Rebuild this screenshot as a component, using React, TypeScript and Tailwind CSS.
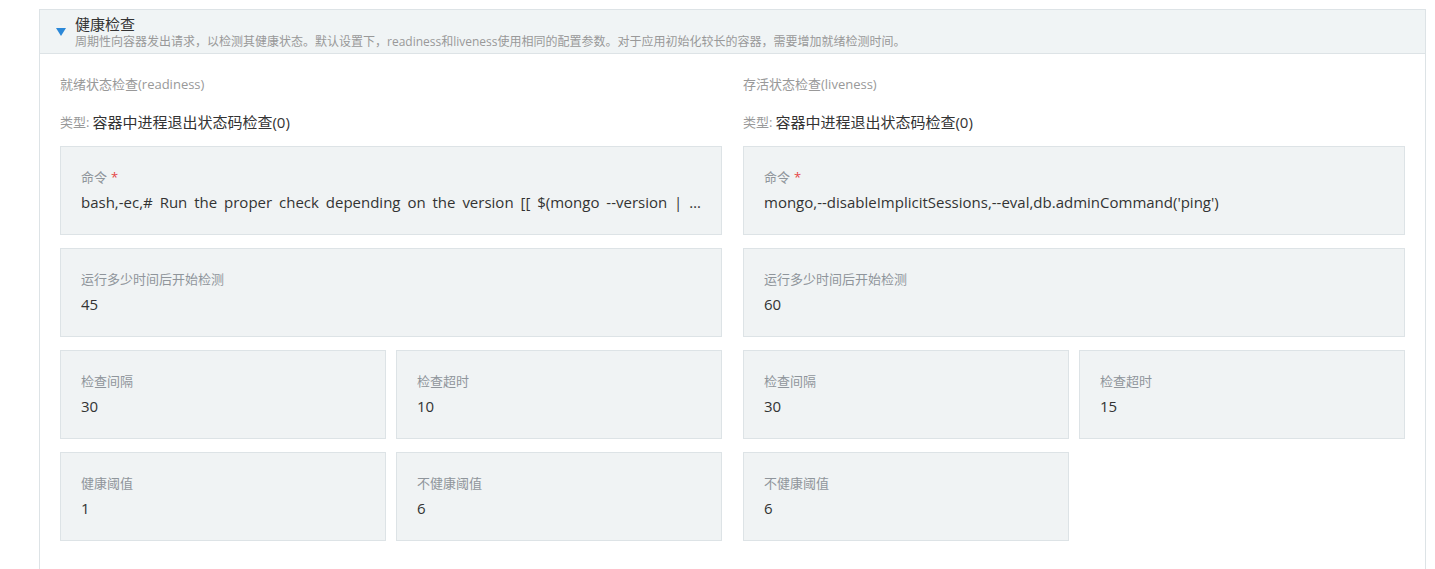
const font = "font-['Open_Sans','Noto_Sans_CJK_SC',sans-serif]";

type Field = { label: string; value: string; required?: boolean };

const FieldCard: React.FC<{ field: Field }> = ({ field }) => (
    <div className="h-[89px] min-w-0 border border-[#dde3e6] bg-[#f0f3f4] px-5 pt-[21px]">
        <div className="text-[13px] leading-[18px] text-[#8f959b]">
            {field.label}
            {field.required && <span className="ml-1 text-[#e54545]">*</span>}
        </div>
        <div className="mt-[5px] truncate text-[15px] leading-[22px] text-[#333] [word-spacing:3px]">{field.value}</div>
    </div>
);

const ProbeColumn: React.FC<{
    title: string;
    command: string;
    initial: string;
    period: string;
    timeout: string;
    success?: string;
    failure: string;
}> = ({ title, command, initial, period, timeout, success, failure }) => (
    <div className="min-w-0">
        <div className="text-[13px] leading-5 text-[#999]">{title}</div>
        <div className="mt-[18px] flex items-center leading-5">
            <span className="text-[13px] text-[#999]">类型:</span>
            <span className="ml-[3px] text-[15px] text-[#333]">容器中进程退出状态码检查(0)</span>
        </div>
        <div className="mt-[14px] flex flex-col gap-[13px]">
            <FieldCard field={{ label: "命令", value: command, required: true }} />
            <FieldCard field={{ label: "运行多少时间后开始检测", value: initial }} />
            <div className="grid grid-cols-2 gap-[10px]">
                <FieldCard field={{ label: "检查间隔", value: period }} />
                <FieldCard field={{ label: "检查超时", value: timeout }} />
            </div>
            <div className="grid grid-cols-2 gap-[10px]">
                {success ? (
                    <>
                        <FieldCard field={{ label: "健康阈值", value: success }} />
                        <FieldCard field={{ label: "不健康阈值", value: failure }} />
                    </>
                ) : (
                    <FieldCard field={{ label: "不健康阈值", value: failure }} />
                )}
            </div>
        </div>
    </div>
);

export default function App() {
    return (
        <div className={`${font} min-h-[569px] bg-white pl-[39px] pr-[9px] pt-[9px]`}>
            <div className="border border-b-0 border-[#dde3e6]">
                <div className="flex items-start border-b border-[#dde3e6] bg-[#f0f4f5] pb-[3px] pl-[16px] pt-[4px]">
                    <svg width="10" height="8" viewBox="0 0 10 8" className="mr-[9px] mt-[14px]">
                        <polygon points="0,0 10,0 5,8" fill="#2b88d8" />
                    </svg>
                    <div>
                        <div className="text-[15px] leading-5 text-[#333]">健康检查</div>
                        <div className="text-[12px] leading-4 text-[#999]">
                            周期性向容器发出请求，以检测其健康状态。默认设置下，readiness和liveness使用相同的配置参数。对于应用初始化较长的容器，需要增加就绪检测时间。
                        </div>
                    </div>
                </div>
                <div className="grid grid-cols-2 gap-[21px] px-5 pb-10 pt-[20px]">
                    <ProbeColumn
                        title="就绪状态检查(readiness)"
                        command='bash,-ec,# Run the proper check depending on the version [[ $(mongo --version | grep "MongoDB shell") =~ ([0-9]+\.[0-9]+\.[0-9]+) ]] && VERSION=${BASH_REMATCH[1]}'
                        initial="45"
                        period="30"
                        timeout="10"
                        success="1"
                        failure="6"
                    />
                    <ProbeColumn
                        title="存活状态检查(liveness)"
                        command="mongo,--disableImplicitSessions,--eval,db.adminCommand('ping')"
                        initial="60"
                        period="30"
                        timeout="15"
                        failure="6"
                    />
                </div>
            </div>
        </div>
    );
}
